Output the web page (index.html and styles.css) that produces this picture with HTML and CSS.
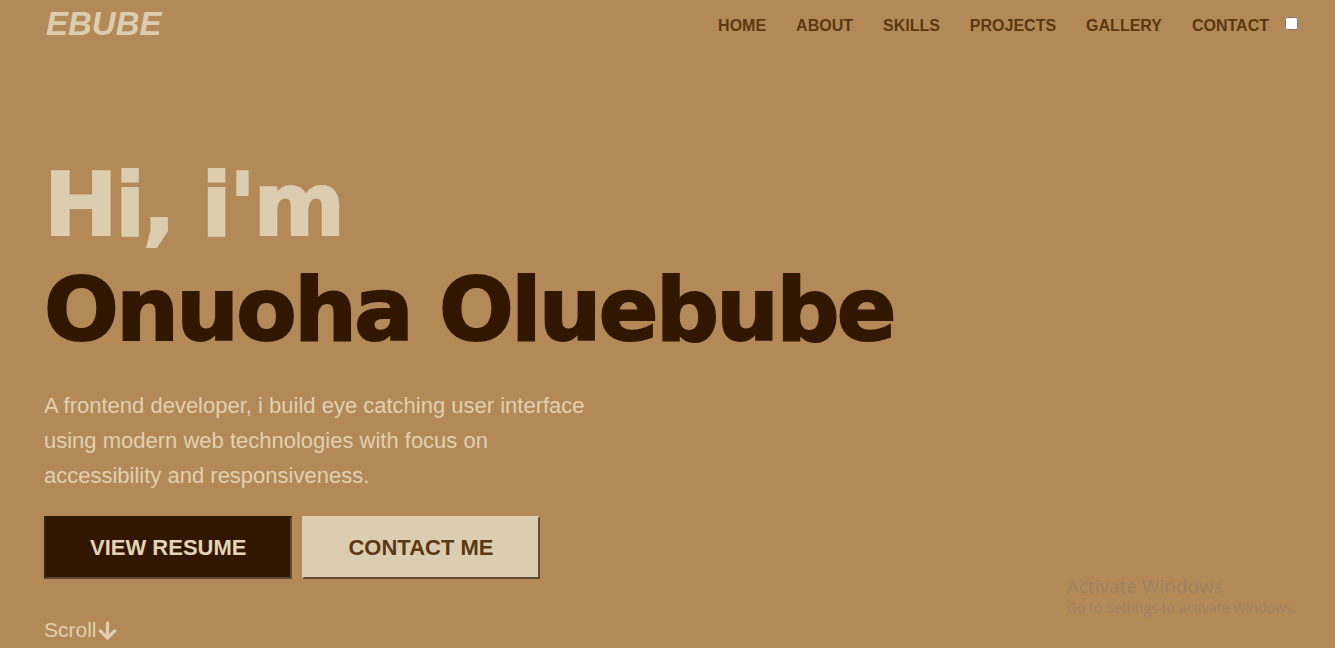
FILE: index.html
```html
<!DOCTYPE html>
<html lang="en">
<head>
<meta charset="utf-8">
<title>Ebube</title>
<link rel="stylesheet" href="styles.css">
</head>
<body>
<header class="topbar">
  <a class="logo" href="#">EBUBE</a>
  <nav class="nav">
    <a href="#">HOME</a>
    <a href="#">ABOUT</a>
    <a href="#">SKILLS</a>
    <a href="#">PROJECTS</a>
    <a href="#">GALLERY</a>
    <a href="#">CONTACT</a>
    <input class="toggle" type="checkbox">
  </nav>
</header>
<main class="hero">
  <h1 class="title">
    <span class="hi">Hi, i'm</span>
    <span class="name">Onuoha Oluebube</span>
  </h1>
  <p class="intro">A frontend developer, i build eye catching user interface using modern web technologies with focus on accessibility and responsiveness.</p>
  <div class="actions">
    <a class="btn btn-dark" href="#">VIEW RESUME</a>
    <a class="btn btn-light" href="#">CONTACT ME</a>
  </div>
  <div class="scroll">Scroll<svg class="arrow" width="19" height="19" viewBox="0 0 20 20"><path d="M10 2 V17.5 M2.5 10.5 L10 18 L17.5 10.5" fill="none" stroke="currentColor" stroke-width="3.4" stroke-linecap="round" stroke-linejoin="round"/></svg></div>
</main>
<div class="watermark">
  <div class="wm-title">Activate Windows</div>
  <div class="wm-sub">Go to Settings to activate Windows.</div>
</div>
</body>
</html>
```
FILE: styles.css
```css
html, body {
  margin: 0;
  padding: 0;
}
body {
  background: #b38a57;
  font-family: "Liberation Sans", Arial, sans-serif;
  height: 648px;
  overflow: hidden;
}
a { text-decoration: none; }

.topbar {
  display: flex;
  align-items: center;
  justify-content: space-between;
  height: 52px;
  padding: 0 37px 0 46px;
}
.logo {
  color: #dccdb0;
  font-size: 33px;
  font-weight: bold;
  font-style: italic;
  margin-top: -4px;
}
.nav {
  display: flex;
  align-items: center;
  gap: 30px;
}
.nav a {
  color: #5c3812;
  font-size: 16px;
  font-weight: bold;
}
.toggle {
  width: 13px;
  height: 13px;
  margin: -5px 0 0 -14px;
}

.hero {
  padding: 0 44px;
}
.title {
  margin: 100px 0 0 0;
  font-family: "DejaVu Sans", sans-serif;
  font-weight: 900;
  font-size: 88px;
  line-height: 105px;
  letter-spacing: -2.6px;
  -webkit-text-stroke: 2px currentColor;
}
.title span { display: block; }
.hi { color: #dccdb0; }
.name { color: #321700; }

.intro {
  margin: 26px 0 0 0;
  max-width: 552px;
  color: #e0d0b1;
  font-size: 22px;
  line-height: 35px;
}

.actions {
  display: flex;
  gap: 10px;
  margin-top: 23px;
}
.btn {
  display: block;
  font-size: 22px;
  font-weight: bold;
  line-height: 25px;
  padding: 17px 44px;
  border: 2px solid;
}
.btn-dark {
  background: #321700;
  color: #e3d4b6;
  border-color: #321700 #5f4a33 #5f4a33 #3a2610;
}
.btn-light {
  background: #dccdb0;
  color: #5c3812;
  border-color: #dccdb0 #5f4a33 #5f4a33 #dccdb0;
}

.scroll {
  display: flex;
  align-items: center;
  margin-top: 39px;
  color: #e0d0b1;
  font-size: 21px;
}
.arrow { margin-left: 1px; }

.watermark {
  position: fixed;
  left: 1067px;
  top: 575px;
  color: #9b8266;
  font-family: "Open Sans", "Noto Sans", sans-serif;
}
.wm-title { font-size: 19px; line-height: 22px; }
.wm-sub { font-size: 14px; line-height: 22px; }
```
